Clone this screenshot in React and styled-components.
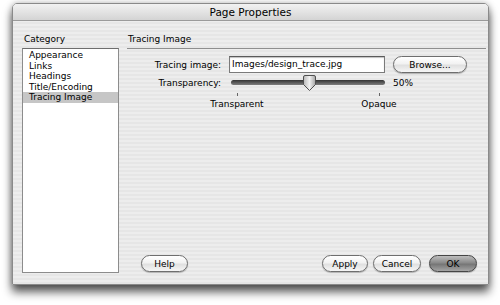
import styled, { createGlobalStyle } from "styled-components";

const GlobalStyle = createGlobalStyle`
  html, body {
    margin: 0;
    padding: 0;
    background: #ffffff;
  }
  body {
    font-family: "DejaVu Sans", "Liberation Sans", sans-serif;
    color: #000;
  }
`;

const Page = styled.div`
  width: 500px;
  height: 305px;
  padding: 3px 0 0 12px;
  box-sizing: border-box;
  overflow: hidden;
  background: #fff;
`;

const Window = styled.div`
  width: 477px;
  height: 282px;
  display: flex;
  flex-direction: column;
  border: 1px solid #8a8a8a;
  border-radius: 5px 5px 0 0;
  box-sizing: border-box;
  background: repeating-linear-gradient(
    to bottom,
    #ededed 0px,
    #ededed 2px,
    #e6e6e6 2px,
    #e6e6e6 4px
  );
  box-shadow: 0 7px 10px rgba(0, 0, 0, 0.65), 0 0 6px rgba(0, 0, 0, 0.25);
  overflow: hidden;
`;

const TitleBar = styled.div`
  height: 16px;
  flex: none;
  display: flex;
  align-items: center;
  justify-content: center;
  font-size: 10.5px;
  background: linear-gradient(to bottom, #f2f2f2, #d4d4d4);
  border-bottom: 1px solid #9a9a9a;
`;

const Body = styled.div`
  flex: 1;
  display: flex;
  padding: 11px 2px 11px 9px;
  gap: 8px;
`;

const Sidebar = styled.div`
  width: 97px;
  display: flex;
  flex-direction: column;
`;

const Caption = styled.div`
  font-size: 9px;
  height: 16px;
  line-height: 14px;
  padding-left: 2px;
`;

const List = styled.div`
  flex: 1;
  background: #fff;
  border: 1px solid #8c8c8c;
  border-top-color: #6e6e6e;
  padding-top: 1px;
`;

const ListItem = styled.div`
  font-size: 9px;
  line-height: 10.5px;
  padding-left: 6px;
  background: ${(p) => (p.$selected ? "#c6c6c6" : "transparent")};
`;

const Main = styled.div`
  flex: 1;
  display: flex;
  flex-direction: column;
`;

const Heading = styled.div`
  font-size: 9px;
  height: 16px;
  line-height: 14px;
  padding-left: 1px;
  border-bottom: 1px solid #8e8e8e;
  margin-bottom: 6px;
`;

const Row = styled.div`
  display: flex;
  align-items: center;
  height: ${(p) => p.$h || 20}px;
  gap: 8px;
`;

const Label = styled.div`
  width: 94px;
  text-align: right;
  font-size: 9px;
  flex: none;
`;

const TextField = styled.div`
  width: 152px;
  height: 15px;
  background: #fff;
  border: 1px solid #7a7a7a;
  border-top-color: #5a5a5a;
  box-shadow: inset 0 1px 1px rgba(0, 0, 0, 0.25);
  font-size: 9px;
  line-height: 15px;
  padding-left: 2px;
  white-space: nowrap;
  overflow: hidden;
`;

const Pill = styled.div`
  width: ${(p) => p.$w}px;
  height: 17px;
  margin-left: ${(p) => p.$ml || 0}px;
  box-sizing: border-box;
  border: 1px solid ${(p) => (p.$primary ? "#454545" : "#6e6e6e")};
  border-radius: 9px;
  display: flex;
  align-items: center;
  justify-content: center;
  font-size: 9px;
  background: ${(p) =>
    p.$primary
      ? "linear-gradient(to bottom, #bdbdbd 0%, #8a8a8a 45%, #767676 55%, #a4a4a4 100%)"
      : "linear-gradient(to bottom, #ffffff 0%, #f2f2f2 45%, #e0e0e0 55%, #f6f6f6 100%)"};
  box-shadow: 0 1px 1px rgba(0, 0, 0, 0.25);
  flex: none;
`;

const SliderWrap = styled.div`
  position: relative;
  width: 154px;
  height: 20px;
  margin-left: 2px;
`;

const Track = styled.div`
  position: absolute;
  left: 0;
  right: 0;
  top: 7px;
  height: 5px;
  border-radius: 3px;
  background: linear-gradient(to bottom, #333, #7e7e7e);
`;

const Thumb = styled.svg`
  position: absolute;
  top: 2px;
`;

const Percent = styled.div`
  font-size: 9px;
`;

const Ticks = styled.div`
  display: flex;
  justify-content: space-between;
  width: 202px;
  margin-left: 80px;
`;

const Tick = styled.div`
  width: 60px;
  display: flex;
  flex-direction: column;
  align-items: center;
  font-size: 9px;
`;

const TickMark = styled.div`
  width: 1px;
  height: 3px;
  background: #666;
  margin: 1px 0 3px;
`;

const Spacer = styled.div`
  flex: 1;
`;

const Buttons = styled.div`
  display: flex;
  align-items: center;
  padding: 0 9px 1px 14px;
  gap: 5px;
`;

const categories = [
  "Appearance",
  "Links",
  "Headings",
  "Title/Encoding",
  "Tracing Image",
];

const App = () => {
  const value = 50;
  const thumbLeft = Math.round((154 - 13) * (value / 100)) + 1;
  return (
    <Page>
      <GlobalStyle />
      <Window>
        <TitleBar>Page Properties</TitleBar>
        <Body>
          <Sidebar>
            <Caption>Category</Caption>
            <List>
              {categories.map((c) => (
                <ListItem key={c} $selected={c === "Tracing Image"}>
                  {c}
                </ListItem>
              ))}
            </List>
          </Sidebar>
          <Main>
            <Heading>Tracing Image</Heading>
            <Row $h={19}>
              <Label>Tracing image:</Label>
              <TextField>Images/design_trace.jpg</TextField>
              <Pill $w={74}>Browse...</Pill>
            </Row>
            <Row $h={18}>
              <Label>Transparency:</Label>
              <SliderWrap>
                <Track />
                <Thumb
                  style={{ left: thumbLeft }}
                  width="13"
                  height="16"
                  viewBox="0 0 13 16"
                >
                  <defs>
                    <linearGradient id="tg" x1="0" x2="1" y1="0" y2="0">
                      <stop offset="0" stopColor="#b8b8b8" />
                      <stop offset="0.5" stopColor="#f2f2f2" />
                      <stop offset="1" stopColor="#a4a4a4" />
                    </linearGradient>
                  </defs>
                  <path
                    d="M2 0.5 H11 Q12.5 0.5 12.5 2 V9.5 L6.5 15.5 L0.5 9.5 V2 Q0.5 0.5 2 0.5 Z"
                    fill="url(#tg)"
                    stroke="#505050"
                    strokeWidth="1"
                  />
                </Thumb>
              </SliderWrap>
              <Percent>{value}%</Percent>
            </Row>
            <Ticks>
              <Tick>
                <TickMark />
                Transparent
              </Tick>
              <Tick>
                <TickMark />
                Opaque
              </Tick>
            </Ticks>
            <Spacer />
            <Buttons>
              <Pill $w={47}>Help</Pill>
              <Spacer />
              <Pill $w={46}>Apply</Pill>
              <Pill $w={48}>Cancel</Pill>
              <Pill $w={48} $ml={3} $primary>
                OK
              </Pill>
            </Buttons>
          </Main>
        </Body>
      </Window>
    </Page>
  );
};

export default App;
